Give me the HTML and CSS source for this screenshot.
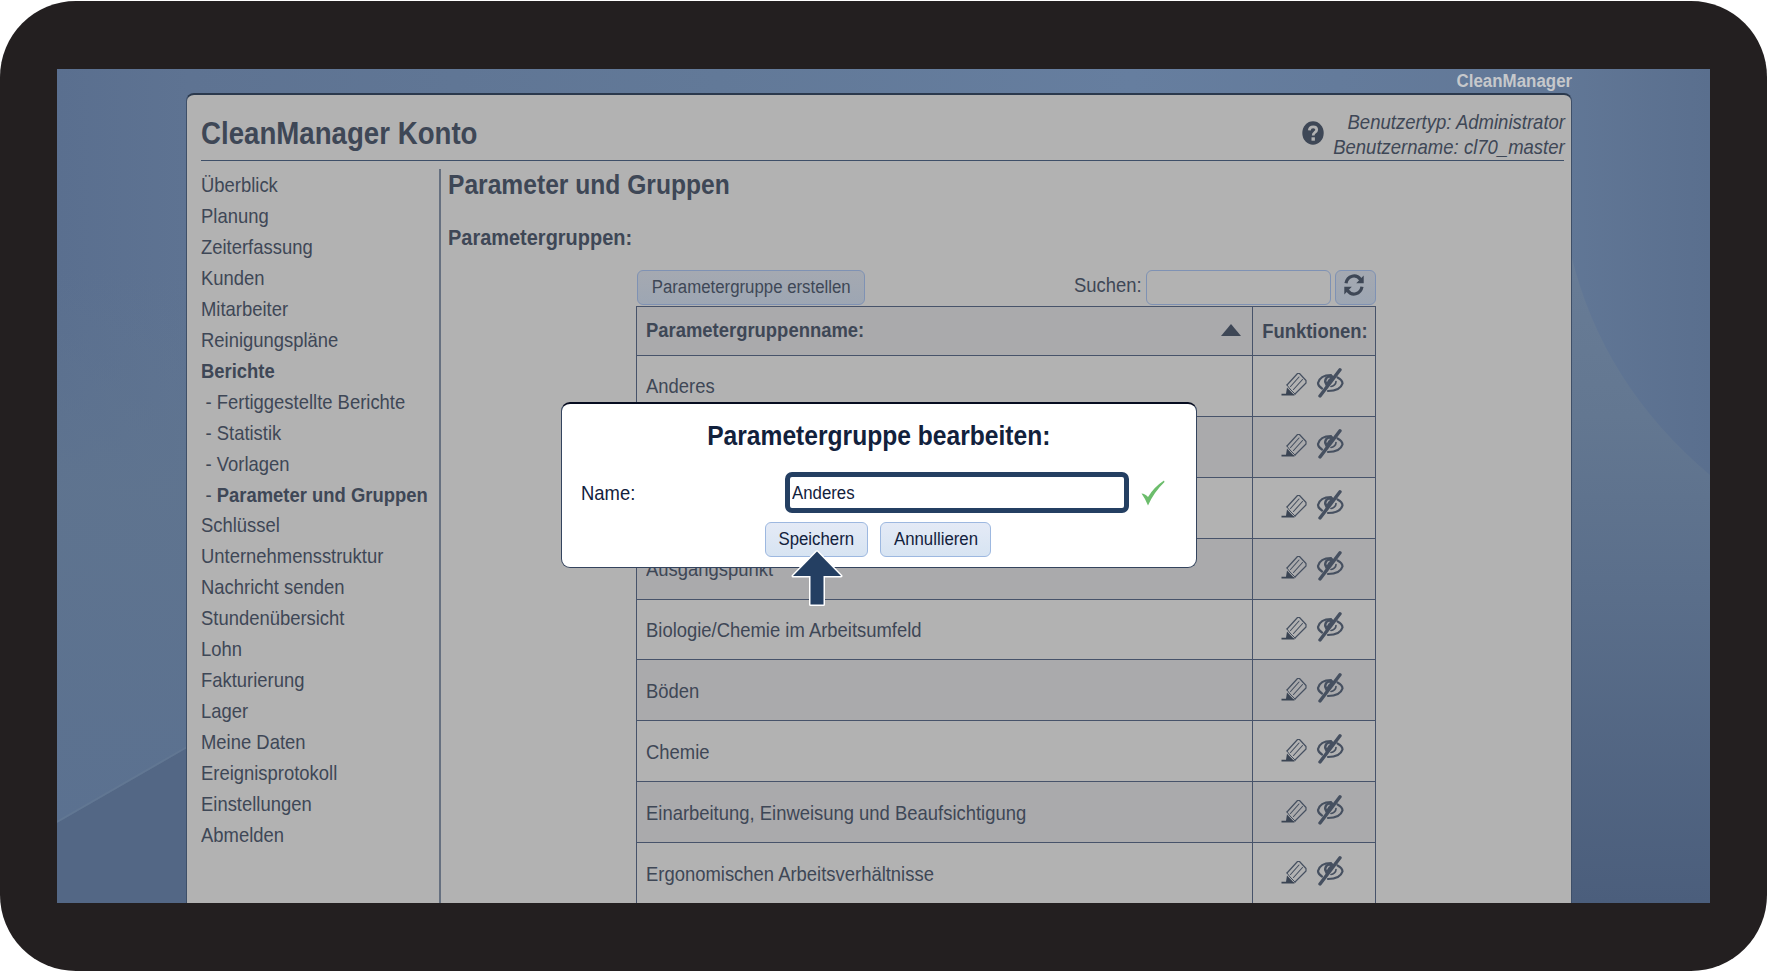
FILE: index.html
```html
<!DOCTYPE html>
<html lang="de">
<head>
<meta charset="utf-8">
<title>CleanManager Konto</title>
<link rel="stylesheet" href="styles.css">
</head>
<body>
<svg width="0" height="0" class="defs" aria-hidden="true">
  <symbol id="pencil" viewBox="0 0 26 25">
    <g fill="none" stroke="#465060" stroke-width="1.200" stroke-linejoin="round" stroke-linecap="round">
      <path d="M6 13 L16.500 1.500 H18.500 L25 8.500 V11 L14 22"/>
      <path d="M9.500 14.500 L18 5 M12.500 17.500 L21.500 7.500" stroke-width="1.100"/>
      <path d="M6 13 L9 17 L11 19 L14 22" stroke-width="1"/>
    </g>
    <path d="M0.500 21.800 H5 L6 15.500 L12 21.800 L13.500 22.500 V23.500 H0.500 Z" fill="#3a4453"/>
  </symbol>
  <symbol id="eye" viewBox="0 0 28 30">
    <g fill="none" stroke="#465060" stroke-width="2.200" stroke-linecap="round">
      <path d="M6 20.500 C3.500 19 2 17 2 15 C3.500 9.500 9 7 15 7"/>
      <path d="M21.500 9.500 C24.500 11 26.500 13 26.500 15.500 C25 20.500 20 23 12 23"/>
      <path d="M20 13.500 C20 16 17.500 18.300 15 18.500" stroke-width="1.700"/>
      <path d="M4 28 L24 1.800" stroke-width="3.400"/>
    </g>
    <path d="M16.500 7 C10.500 6.500 8 9.500 8 14 L10 18.500 L17.500 9 Z" fill="#465060"/>
    <path d="M10.800 13.500 Q11.300 10.800 13.500 10.200" stroke="#a8a9ac" stroke-width="1.300" fill="none"/>
  </symbol>
</svg>
<div class="device">
  <div class="screen">
    <svg class="wallpaper" viewBox="0 0 1653 834" preserveAspectRatio="none" aria-hidden="true">
      <defs>
        <linearGradient id="leftTone" x1="0" y1="0" x2="0" y2="1"><stop offset="0" stop-color="#5f748f" stop-opacity="0"/><stop offset=".4" stop-color="#5f748f" stop-opacity=".9"/><stop offset="1" stop-color="#5b7190"/></linearGradient>
        <linearGradient id="rightTone" x1="0" y1="0" x2="0" y2="1"><stop offset="0" stop-color="#687c96"/><stop offset=".25" stop-color="#637791"/><stop offset=".5" stop-color="#5b6f8b"/><stop offset="1" stop-color="#4b5e7c"/></linearGradient>
      </defs>
      <path d="M0 200 H130 V679 L0 754 Z" fill="url(#leftTone)"/>
      <path d="M0 754 L130 679 V834 H0 Z" fill="#536785"/>
      <path d="M0 753 L130 678" stroke="#667b95" stroke-width="2" opacity=".6"/>
      <path d="M1514 185 Q1545 315 1653 406 V834 H1514 Z" fill="url(#rightTone)"/>
    </svg>
    <div class="brand"><span class="sq sq-right">CleanManager</span></div>
    <main class="panel">
      <header class="head">
        <h1><span class="sq">CleanManager Konto</span></h1>
        <svg class="help" viewBox="0 0 22 24" preserveAspectRatio="none"><ellipse cx="11" cy="12" rx="10.700" ry="11.800" fill="#3e4756"/><path d="M7.300 9.300 Q7.600 5.800 11.200 5.800 Q14.700 5.800 14.700 8.800 Q14.700 10.500 12.700 11.600 Q11.200 12.500 11.200 14.400" fill="none" stroke="#b2b2b2" stroke-width="2.800"/><rect x="9.500" y="16.300" width="3.400" height="3.400" fill="#b2b2b2"/></svg>
        <div class="user"><span class="sq sq-right">Benutzertyp: Administrator</span><span class="sq sq-right">Benutzername: cl70_master</span></div>
      </header>
      <div class="body">
        <nav class="nav">
          <ul class="sq">
            <li>Überblick</li><li>Planung</li><li>Zeiterfassung</li><li>Kunden</li><li>Mitarbeiter</li><li>Reinigungspläne</li>
            <li><b>Berichte</b></li>
            <li class="sub">- Fertiggestellte Berichte</li><li class="sub">- Statistik</li><li class="sub">- Vorlagen</li><li class="sub">- <b>Parameter und Gruppen</b></li>
            <li>Schlüssel</li><li>Unternehmensstruktur</li><li>Nachricht senden</li><li>Stundenübersicht</li><li>Lohn</li><li>Fakturierung</li><li>Lager</li><li>Meine Daten</li><li>Ereignisprotokoll</li><li>Einstellungen</li><li>Abmelden</li>
          </ul>
        </nav>
        <section class="content">
          <h2><span class="sq">Parameter und Gruppen</span></h2>
          <h3><span class="sq">Parametergruppen:</span></h3>
          <div class="list">
            <div class="tools">
              <div class="btn create"><span class="sq sq-mid">Parametergruppe erstellen</span></div>
              <label><span class="sq sq-right">Suchen:</span></label>
              <div class="search"></div>
              <div class="btn refresh"><svg viewBox="0 0 20 22" preserveAspectRatio="none"><g fill="none" stroke="#3e4756" stroke-width="3.200"><path d="M2 9.200 C3.500 1.500 12 -0.500 16.500 5.500"/><path d="M18 12.800 C16.500 20.500 8 22.500 3.500 16.500"/></g><path d="M19.700 1.500 V9.200 H12.200 Z M0.300 20.500 V12.800 H7.800 Z" fill="#3e4756"/></svg></div>
            </div>
            <div class="table">
              <div class="row th"><div class="name"><b class="sq">Parametergruppenname:</b><i class="sort"></i></div><div class="fn"><b class="sq sq-mid">Funktionen:</b></div></div>
              <div class="row"><div class="name"><span class="sq">Anderes</span></div><div class="fn"><svg class="pen"><use href="#pencil"/></svg><svg class="eye"><use href="#eye"/></svg></div></div>
              <div class="row alt"><div class="name"></div><div class="fn"><svg class="pen"><use href="#pencil"/></svg><svg class="eye"><use href="#eye"/></svg></div></div>
              <div class="row"><div class="name"></div><div class="fn"><svg class="pen"><use href="#pencil"/></svg><svg class="eye"><use href="#eye"/></svg></div></div>
              <div class="row alt"><div class="name"><span class="sq">Ausgangspunkt</span></div><div class="fn"><svg class="pen"><use href="#pencil"/></svg><svg class="eye"><use href="#eye"/></svg></div></div>
              <div class="row"><div class="name"><span class="sq">Biologie/Chemie im Arbeitsumfeld</span></div><div class="fn"><svg class="pen"><use href="#pencil"/></svg><svg class="eye"><use href="#eye"/></svg></div></div>
              <div class="row alt"><div class="name"><span class="sq">Böden</span></div><div class="fn"><svg class="pen"><use href="#pencil"/></svg><svg class="eye"><use href="#eye"/></svg></div></div>
              <div class="row"><div class="name"><span class="sq">Chemie</span></div><div class="fn"><svg class="pen"><use href="#pencil"/></svg><svg class="eye"><use href="#eye"/></svg></div></div>
              <div class="row alt"><div class="name"><span class="sq">Einarbeitung, Einweisung und Beaufsichtigung</span></div><div class="fn"><svg class="pen"><use href="#pencil"/></svg><svg class="eye"><use href="#eye"/></svg></div></div>
              <div class="row"><div class="name"><span class="sq">Ergonomischen Arbeitsverhältnisse</span></div><div class="fn"><svg class="pen"><use href="#pencil"/></svg><svg class="eye"><use href="#eye"/></svg></div></div>
            </div>
          </div>
        </section>
      </div>
    </main>
    <div class="dialog">
      <h2><span class="sq sq-mid">Parametergruppe bearbeiten:</span></h2>
      <div class="field">
        <label><span class="sq">Name:</span></label>
        <div class="value"><span class="sq">Anderes</span></div>
        <svg class="check" viewBox="0 0 24 26"><path d="M0.500 13.500 Q4 13.500 7 17 Q13 7 23 0.500 L23.500 2 Q13 12 7 25.500 Q4.500 19 0.500 13.500 Z" fill="#6cbd6c"/></svg>
      </div>
      <div class="actions"><div class="btn save"><span class="sq sq-mid">Speichern</span></div><div class="btn cancel"><span class="sq sq-mid">Annullieren</span></div></div>
      <svg class="arrow" viewBox="0 0 52 58"><path d="M26 2.500 L50 27 H32.500 V55.500 H19.500 V27 H2 Z" fill="#243f62" stroke="#fff" stroke-width="3" stroke-linejoin="round" paint-order="stroke"/></svg>
    </div>
  </div>
</div>
</body>
</html>
```

FILE: styles.css
```css
* { box-sizing: border-box; }
body { margin: 0; background: #fff; font: 20.600px/23px "Liberation Sans", Arial, sans-serif; color: #3e4756; overflow: hidden; }
h1, h2, h3, ul { margin: 0; padding: 0; }
.defs { position: absolute; }
/* condensed lettering */
.sq { display: inline-block; transform: scaleX(.895); transform-origin: left center; white-space: nowrap; }
.sq-right { transform-origin: right center; }
.sq-mid { transform-origin: center; }
.device { width: 1767px; height: 970px; margin-top: 1px; padding: 68px 57px; background: #231f20; border-radius: 76px; }
.screen { position: relative; width: 1653px; height: 834px; overflow: hidden; background: linear-gradient(90deg, #5a6f8f 0, #5e7392 8%, #627998 40%, #667e9f 65%, #627897 90%, #5a6f8e 100%); }
.wallpaper { position: absolute; inset: 0; width: 100%; height: 100%; }
.brand { position: relative; height: 24px; padding-right: 138px; text-align: right; font-weight: bold; font-size: 18.900px; line-height: 24px; color: #c6c8cb; }
.panel { position: relative; width: 1386px; height: 830px; margin-left: 129px; padding-left: 1px; background: #b2b2b2; border: 1px solid #3e4f68; border-top: 2px solid #2b394d; border-radius: 8px 8px 0 0; }
.head { display: flex; height: 66px; margin: 0 7px 0 13px; border-bottom: 1px solid #3e4f68; }
h1 { flex: 1; font-size: 30.900px; line-height: 78px; }
.help { width: 22px; height: 24px; margin: 26px 9px 0 0; }
.user { display: flex; flex-direction: column; align-items: flex-end; width: 232px; padding-top: 14px; margin-right: -1px; font-size: 20.700px; font-style: italic; line-height: 25px; }
.body { display: flex; }
.nav { width: 240px; height: 760px; margin: 8px 0 0 13px; border-right: 2px solid #667080; }
.nav ul { padding-top: 1px; list-style: none; line-height: 30.950px; }
.sub { padding-left: 5px; }
.content { flex: 1; padding-left: 7px; }
h2 { font-size: 27.500px; line-height: 30px; }
.content h2 { padding-top: 9px; }
h3 { padding-top: 26px; font-size: 22.300px; line-height: 24px; }
.list { width: 740px; margin: 20px 0 0 188px; }
.tools { display: flex; height: 36px; }
.btn { display: flex; align-items: center; justify-content: center; border: 1px solid #7f92b4; border-radius: 6px; background: linear-gradient(#a5a9b1, #9da6b3); font-size: 18.800px; }
.create { width: 228px; height: 35px; padding-bottom: 3px; margin: 0 0 0 1px; }
.tools label { flex: 1; text-align: right; padding: 3px 4px 0 0; }
.search { width: 185px; height: 35px; margin: 0 4px 0 0; border: 1px solid #7f92b4; border-radius: 6px; }
.refresh { width: 41px; height: 35px; padding: 0 3px 5px 0; }
.refresh svg { width: 20px; height: 22px; }
.table { border: 1px solid #47536a; }
.row { display: flex; height: 60.900px; border-bottom: 1px solid #47536a; }
.name { flex: 1; display: flex; align-items: center; padding-left: 9px; border-right: 1px solid #47536a; }
.fn { width: 122px; display: flex; align-items: center; justify-content: center; }
.row:not(.th) .fn { padding-right: 8px; }
.th { height: 49px; }
.th, .alt { background: #aaaaac; }
.th .name { justify-content: space-between; padding: 0 11px 4px 9px; }
.th .fn { padding: 0 0 2px 1px; }
.sort { margin-top: 2px; border: 10px solid transparent; border-top: 0; border-bottom: 12px solid #3e4756; }
.pen { width: 26px; height: 25px; margin: 0 9px 2px 4px; }
.eye { width: 28px; height: 30px; margin-bottom: 5px; }
.dialog { position: absolute; left: 504px; top: 333px; width: 636px; height: 166px; background: #fff; color: #12213c; border: 1px solid #34445e; border-top: 2px solid #060c20; border-radius: 9px; }
.dialog h2 { text-align: center; padding: 17px 1px 0 0; }
.field { display: flex; align-items: center; height: 42px; margin-top: 20px; padding-left: 19px; }
.field label { width: 204px; }
.value { display: flex; align-items: center; width: 344px; height: 41px; padding-left: 2px; border: 5px solid #243f62; border-radius: 7px; font-size: 18.800px; }
.check { width: 24px; height: 26px; margin: 1px 0 0 12px; }
.actions { display: flex; gap: 12px; padding: 9px 0 0 203px; }
.dialog .btn { height: 35px; padding-bottom: 2px; border: 1px solid #9db8e0; background: linear-gradient(#e4eaf6, #d7e4f2); }
.save { width: 103px; }
.cancel { width: 111px; }
.arrow { position: absolute; left: 229px; top: 145px; width: 52px; height: 58px; }
```
